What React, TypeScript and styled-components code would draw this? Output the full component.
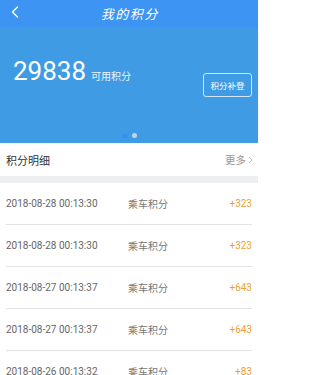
import React from "react";
import styled, { createGlobalStyle } from "styled-components";

interface IRecord {
  time: string;
  type: string;
  points: number;
}

const records: IRecord[] = [
  { time: "2018-08-28 00:13:30", type: "乘车积分", points: 323 },
  { time: "2018-08-28 00:13:30", type: "乘车积分", points: 323 },
  { time: "2018-08-27 00:13:37", type: "乘车积分", points: 643 },
  { time: "2018-08-27 00:13:37", type: "乘车积分", points: 643 },
  { time: "2018-08-26 00:13:32", type: "乘车积分", points: 83 },
];

function App() {
  return (
    <>
      <GlobalStyle />
      <Layout>
        <TopBar>
          <BackButton>
            <svg width="8" height="12" viewBox="0 0 8 12">
              <path
                d="M6.5 1 L1.5 6 L6.5 11"
                fill="none"
                stroke="#fff"
                strokeWidth="1.4"
                strokeLinecap="round"
                strokeLinejoin="round"
              />
            </svg>
          </BackButton>
          <Title>我的积分</Title>
        </TopBar>

        <Banner>
          <BannerRow>
            <Balance>
              <Amount>29838</Amount>
              <AmountLabel>可用积分</AmountLabel>
            </Balance>
            <SupplementButton>积分补登</SupplementButton>
          </BannerRow>
          <Dots>
            <Dot active />
            <Dot />
          </Dots>
        </Banner>

        <SectionHeader>
          <SectionTitle>积分明细</SectionTitle>
          <More>
            更多
            <svg width="5" height="8" viewBox="0 0 5 8">
              <path
                d="M1 1 L4 4 L1 7"
                fill="none"
                stroke="#bbb"
                strokeWidth="0.9"
              />
            </svg>
          </More>
        </SectionHeader>
        <Gap />

        <List>
          {records.map((rec, idx) => (
            <Row key={idx}>
              <Time>{rec.time}</Time>
              <Type>{rec.type}</Type>
              <Points>+{rec.points}</Points>
            </Row>
          ))}
        </List>
      </Layout>
    </>
  );
}

const GlobalStyle = createGlobalStyle`
  html, body {
    margin: 0;
    padding: 0;
    background: #fff;
    overflow: hidden;
  }
  body {
    font-family: Roboto, "Noto Sans CJK SC", sans-serif;
  }
`;

const Layout = styled.div`
  width: 258px;
  height: 375px;
  display: flex;
  flex-direction: column;
  overflow: hidden;
  > * {
    flex-shrink: 0;
  }
`;

const TopBar = styled.div`
  height: 27px;
  background: #3d94f3;
  display: flex;
  align-items: center;
  justify-content: center;
  position: relative;
`;

const BackButton = styled.div`
  position: absolute;
  left: 11px;
  top: 6px;
  display: flex;
`;

const Title = styled.div`
  color: #fff;
  font-family: "Noto Sans CJK SC", sans-serif;
  font-size: 13px;
  letter-spacing: 1.5px;
  font-style: italic;
  padding-left: 1.5px;
`;

const Banner = styled.div`
  height: 116px;
  background: #3f9ce4;
  display: flex;
  flex-direction: column;
  box-sizing: border-box;
  padding: 31px 6px 5px 13px;
`;

const BannerRow = styled.div`
  display: flex;
  justify-content: space-between;
  align-items: flex-start;
`;

const Balance = styled.div`
  display: flex;
  align-items: baseline;
`;

const Amount = styled.span`
  font-family: Roboto, sans-serif;
  font-size: 26px;
  line-height: 26px;
  color: #fff;
`;

const AmountLabel = styled.span`
  font-family: "Noto Sans CJK SC", sans-serif;
  font-size: 10px;
  color: rgba(255, 255, 255, 0.92);
  margin-left: 5px;
`;

const SupplementButton = styled.div`
  margin-top: 15px;
  width: 49px;
  height: 24px;
  box-sizing: border-box;
  border: 1.5px solid rgba(255, 255, 255, 0.75);
  border-radius: 3px;
  display: flex;
  align-items: center;
  justify-content: center;
  font-family: "Noto Sans CJK SC", sans-serif;
  font-size: 8.5px;
  color: #fff;
`;

const Dots = styled.div`
  margin-top: auto;
  display: flex;
  justify-content: center;
  align-items: center;
  gap: 4px;
  padding-right: 7px;
`;

const Dot = styled.span<{ active?: boolean }>`
  width: ${(props) => (props.active ? "7px" : "5px")};
  height: ${(props) => (props.active ? "4px" : "5px")};
  border-radius: 3px;
  background: ${(props) => (props.active ? "#3a8df2" : "#c6d3e2")};
`;

const SectionHeader = styled.div`
  height: 33px;
  padding: 0 5px 0 6px;
  display: flex;
  align-items: center;
  justify-content: space-between;
`;

const SectionTitle = styled.div`
  font-family: "Noto Sans CJK SC", sans-serif;
  font-size: 11px;
  color: #333;
`;

const More = styled.div`
  display: flex;
  align-items: center;
  gap: 2px;
  font-family: "Noto Sans CJK SC", sans-serif;
  font-size: 10.5px;
  color: #999;
`;

const Gap = styled.div`
  height: 7px;
  background: #eeeff3;
`;

const List = styled.div`
  display: flex;
  flex-direction: column;
  padding: 0 6px;
`;

const Row = styled.div`
  height: 41px;
  flex-shrink: 0;
  display: grid;
  grid-template-columns: 122px 1fr auto;
  align-items: center;
  border-bottom: 1px solid #e3e3e3;
`;

const Time = styled.div`
  font-family: Roboto, sans-serif;
  font-size: 10px;
  color: #666;
`;

const Type = styled.div`
  font-family: "Noto Sans CJK SC", sans-serif;
  font-size: 10px;
  color: #777;
`;

const Points = styled.div`
  font-family: Roboto, sans-serif;
  font-size: 10px;
  color: #f0a030;
`;

export default App;
